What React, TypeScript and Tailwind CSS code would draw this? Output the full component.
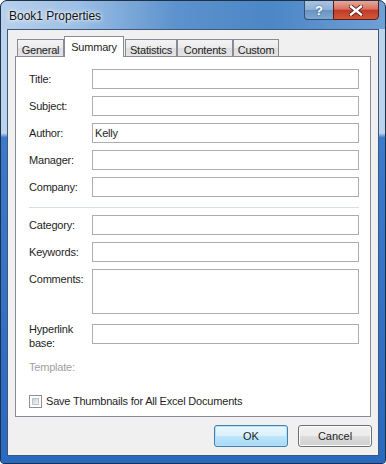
import React from 'react';

const FONT = "font-['Liberation_Sans',Arial,sans-serif]";

const Field = ({ label, value, tall }: { label: string; value?: string; tall?: boolean }) => (
    <div className="flex items-start">
        <div className="w-[63px] h-[20px] flex items-center text-[11px] tracking-[-0.2px] text-[#1e1e1e] shrink-0">{label}</div>
        <div className={`w-[267px] ${tall ? 'h-[45px]' : 'h-[20px]'} border border-[#abadb3] bg-white flex items-start`}>
            {value && <span className="text-[11px] tracking-[-0.2px] text-[#1e1e1e] leading-[18px] pl-[2px]">{value}</span>}
        </div>
    </div>
);

const TABS = [
    { name: 'General', w: 'w-[47px]' },
    { name: 'Summary', w: 'w-[60px]', active: true },
    { name: 'Statistics', w: 'w-[52px] ml-[1px]' },
    { name: 'Contents', w: 'w-[56px]' },
    { name: 'Custom', w: 'w-[46px]' },
];

export default function App() {
    return (
        <div className={`${FONT} w-[386px] h-[464px] flex flex-col rounded-t-[7px] rounded-b-[4px] border border-[#1f3147] bg-[#2a69c0] overflow-hidden`}>
            {/* Title bar */}
            <div className="h-[28px] shrink-0 flex items-start justify-between bg-[linear-gradient(90deg,#b7d0eb_0%,#9cbfe5_20%,#5d93cd_45%,#4b86c6_70%,#6fa0d6_100%)]">
                <div className="pl-[8px] pt-[6px] text-[12px] text-[#121212] [text-shadow:0_0_6px_#ffffff,0_0_3px_#ffffff]">Book1 Properties</div>
                <div className="flex mr-[6px] -mt-px">
                    <div className="w-[29px] h-[20px] rounded-bl-[4px] border border-[#34506e] border-r-0 bg-[linear-gradient(180deg,#a9c4e2_0%,#8eb0d6_50%,#6b93c2_51%,#7ea7d3_100%)] flex items-center justify-center">
                        <span className="text-white font-bold text-[13px] leading-none [text-shadow:0_0_2px_#2a4d78]">?</span>
                    </div>
                    <div className="w-[46px] h-[20px] rounded-br-[4px] border border-[#5a1d16] bg-[linear-gradient(180deg,#e8a89c_0%,#d7715f_45%,#c03b26_52%,#d2583c_100%)] flex items-center justify-center">
                        <svg width="14" height="11" viewBox="0 0 14 11">
                            <path d="M2 1.5 L12 9.5 M12 1.5 L2 9.5" stroke="#4a1710" strokeWidth="4" strokeLinecap="square" />
                            <path d="M2 1.5 L12 9.5 M12 1.5 L2 9.5" stroke="#ffffff" strokeWidth="2.4" strokeLinecap="square" />
                        </svg>
                    </div>
                </div>
            </div>

            {/* Side frames + client area */}
            <div className="flex-1 px-[6px] pb-[7px] bg-linear-to-b from-[#bcd3ed] from-[24%] via-[#3b7acd] via-[25%] to-[#2a69c0]">
                <div className="h-[427px] border border-[#3d5878] bg-[#f0f0f0] flex flex-col px-[7px] pt-[6px]">
                    {/* Tabs */}
                    <div className="h-[20px] flex items-end pl-[2px]">
                        {TABS.map(t =>
                            t.active ? (
                                <div key={t.name} className={`${t.w} h-[21px] -mb-px relative z-10 bg-white border border-b-0 border-[#898c95] flex justify-center pt-[2px] text-[11px] tracking-[-0.2px] text-[#1e1e1e]`}>
                                    {t.name}
                                </div>
                            ) : (
                                <div key={t.name} className={`${t.w} h-[17px] border border-b-0 border-[#898c95] bg-[linear-gradient(180deg,#f3f3f3_0%,#ebebeb_50%,#dedede_51%,#e4e4e4_100%)] flex justify-center pt-[2px] text-[11px] tracking-[-0.2px] text-[#1e1e1e]`}>
                                    {t.name}
                                </div>
                            )
                        )}
                    </div>

                    {/* Panel */}
                    <div className="h-[361px] border border-[#898c95] bg-white pl-[13px] pt-[12px] flex flex-col">
                        <div className="flex flex-col gap-[7px]">
                            <Field label="Title:" />
                            <Field label="Subject:" />
                            <Field label="Author:" value="Kelly" />
                            <Field label="Manager:" />
                            <Field label="Company:" />
                        </div>
                        <div className="w-[330px] h-px bg-[#d5dfe5] mt-[10px] mb-[7px]" />
                        <div className="flex flex-col gap-[7px]">
                            <Field label="Category:" />
                            <Field label="Keywords:" />
                            <Field label="Comments:" tall />
                        </div>
                        <div className="flex items-start mt-[10px]">
                            <div className="w-[63px] text-[11px] tracking-[-0.2px] leading-[14px] text-[#1e1e1e] -mt-[2px]">Hyperlink<br />base:</div>
                            <div className="w-[267px] h-[20px] border border-[#abadb3] bg-white" />
                        </div>
                        <div className="text-[11px] tracking-[-0.2px] text-[#a0a0a0] mt-[10px] leading-[14px]">Template:</div>
                        <div className="flex items-center mt-[19px] gap-[4px]">
                            <div className="w-[13px] h-[13px] border border-[#8e8f8f] bg-white p-[2px]">
                                <div className="w-full h-full bg-[linear-gradient(135deg,#cbcfd5_0%,#f6f6f6_100%)] border border-[#c0c4c8]" />
                            </div>
                            <span className="text-[11px] tracking-[-0.2px] text-[#1e1e1e]">Save Thumbnails for All Excel Documents</span>
                        </div>
                    </div>

                    {/* Buttons */}
                    <div className="flex justify-end gap-[10px] mt-[8px] mr-[-1px]">
                        <button className="w-[74px] h-[22px] rounded-[3px] border border-[#3c7fb1] bg-[linear-gradient(180deg,#eaf6fd_0%,#d9f0fc_50%,#bee6fd_51%,#a7d9f5_100%)] shadow-[inset_0_0_0_1px_#b8e2f8] text-[11px] text-[#1e1e1e]">OK</button>
                        <button className="w-[74px] h-[22px] rounded-[3px] border border-[#707070] bg-[linear-gradient(180deg,#f2f2f2_0%,#ebebeb_50%,#dddddd_51%,#cfcfcf_100%)] shadow-[inset_0_0_0_1px_#fcfcfc] text-[11px] text-[#1e1e1e]">Cancel</button>
                    </div>
                </div>
            </div>
        </div>
    );
}
